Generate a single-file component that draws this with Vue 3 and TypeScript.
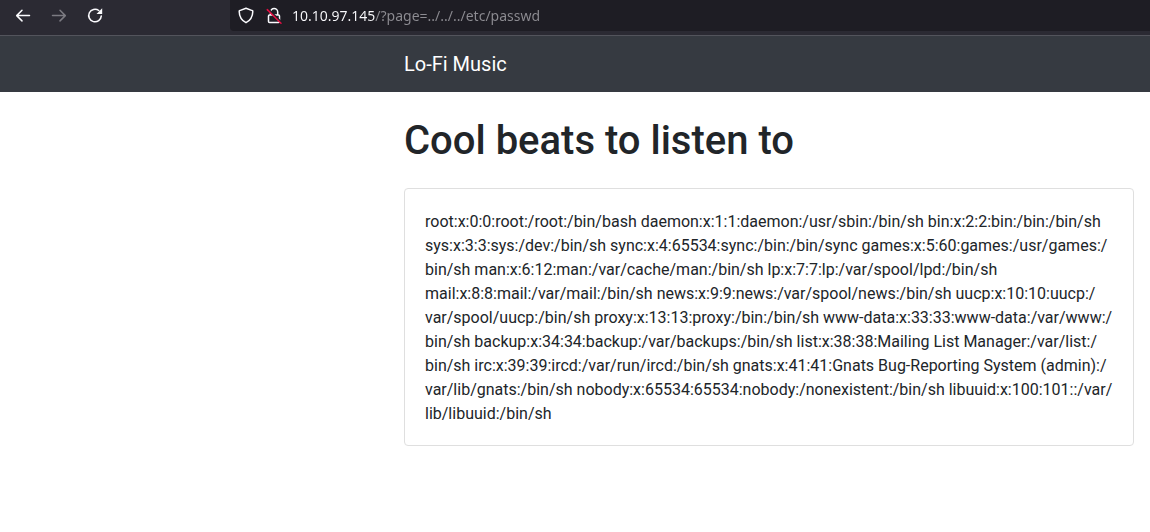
<script setup lang="ts">
import { ref } from 'vue'

const address = ref<string>('10.10.97.145/?page=../../../etc/passwd')

const accounts: string[] = [
  'root:x:0:0:root:/root:/bin/bash',
  'daemon:x:1:1:daemon:/usr/sbin:/bin/sh',
  'bin:x:2:2:bin:/bin:/bin/sh',
  'sys:x:3:3:sys:/dev:/bin/sh',
  'sync:x:4:65534:sync:/bin:/bin/sync',
  'games:x:5:60:games:/usr/games:/bin/sh',
  'man:x:6:12:man:/var/cache/man:/bin/sh',
  'lp:x:7:7:lp:/var/spool/lpd:/bin/sh',
  'mail:x:8:8:mail:/var/mail:/bin/sh',
  'news:x:9:9:news:/var/spool/news:/bin/sh',
  'uucp:x:10:10:uucp:/var/spool/uucp:/bin/sh',
  'proxy:x:13:13:proxy:/bin:/bin/sh',
  'www-data:x:33:33:www-data:/var/www:/bin/sh',
  'backup:x:34:34:backup:/var/backups:/bin/sh',
  'list:x:38:38:Mailing List Manager:/var/list:/bin/sh',
  'irc:x:39:39:ircd:/var/run/ircd:/bin/sh',
  'gnats:x:41:41:Gnats Bug-Reporting System (admin):/var/lib/gnats:/bin/sh',
  'nobody:x:65534:65534:nobody:/nonexistent:/bin/sh',
  'libuuid:x:100:101::/var/lib/libuuid:/bin/sh',
]

// A zero-width space after each slash lets long paths wrap there.
const listing: string = accounts.join(' ').replace(/\//g, '/\u200b')
</script>

<template>
  <div class="window">
    <div class="toolbar">
      <div class="history">
        <button type="button" class="tool" aria-label="Back">
          <svg viewBox="0 0 16 16"><path d="M7 2.300 1.700 7.600 7 12.900M1.900 7.600h12.600" /></svg>
        </button>
        <button type="button" class="tool" aria-label="Forward" disabled>
          <svg viewBox="0 0 16 16"><path d="M9 2.300l5.300 5.300L9 12.900M14.100 7.600H1.500" /></svg>
        </button>
        <button type="button" class="tool" aria-label="Reload">
          <svg viewBox="0 0 16 16">
            <path d="M11.800 2.500A6.300 6.300 0 1 0 14.300 7.900" />
            <path class="solid" d="M15.200.3v5.700H9.500z" />
          </svg>
        </button>
      </div>
      <div class="address">
        <button type="button" class="badge" aria-label="Tracking protection">
          <svg viewBox="0 0 16 16">
            <path d="M8 .3 14.300 2.600c.4.1.5.4.5.8-.1 5-2.400 8.900-6.800 11.300C3.600 12.300 1.300 8.400 1.200 3.400c0-.4.1-.7.5-.8z" />
          </svg>
        </button>
        <button type="button" class="badge" aria-label="Connection is not secure">
          <svg viewBox="0 0 16 16">
            <path d="M4.500 7V4a3.600 3.600 0 0 1 7.200 0V7M3.500 7h9q1 0 1 1v5.600q0 1-1 1h-9q-1 0-1-1V8q0-1 1-1z" />
            <path class="gap" d="M2.200.9 15.900 14.600" />
            <path class="strike" d="M1.300 1.600 15 15.300" />
          </svg>
        </button>
        <input v-model="address" class="url" type="text" aria-label="Address" spellcheck="false" />
      </div>
    </div>

    <nav class="navbar">
      <a class="brand" href="#">Lo-Fi Music</a>
    </nav>

    <main class="content">
      <h1>Cool beats to listen to</h1>
      <section class="card">
        <p>{{ listing }}</p>
      </section>
    </main>
  </div>
</template>

<style>
body {
  margin: 0;
  background: #fff;
}
</style>

<style scoped>
.window {
  font-family: Roboto, "Liberation Sans", sans-serif;
  font-size: 16px;
  line-height: 24px;
  color: #212529;
}

.toolbar {
  display: flex;
  height: 35px;
  background: #2b2a33;
  border-bottom: 1px solid #53545c;
}

.history {
  display: flex;
  flex: none;
  box-sizing: border-box;
  width: 230px;
  height: 31px;
  padding-left: 15px;
  gap: 20px;
  align-items: center;
}

.tool,
.badge {
  flex: none;
  width: 16px;
  height: 16px;
  padding: 0;
  border: 0;
  background: none;
  color: #fbfbfe;
}

.tool:disabled {
  color: #7c7b82;
}

svg {
  display: block;
  width: 16px;
  height: 16px;
  overflow: visible;
  fill: none;
  stroke: currentColor;
  stroke-width: 1.5;
  stroke-linecap: round;
  stroke-linejoin: round;
}

.solid {
  fill: currentColor;
  stroke: none;
}

.gap {
  stroke: #1e1d24;
}

.strike {
  stroke: #e20f42;
}

.address {
  display: flex;
  flex: 1;
  height: 31px;
  padding-left: 8px;
  align-items: center;
  background: #1e1d24;
  border-bottom-left-radius: 4px;
}

.badge + .badge {
  margin: 0 10px 0 12px;
}

.url {
  --host-width: 83px;
  flex: 1;
  min-width: 0;
  height: 24px;
  padding: 0;
  border: 0;
  outline: 0;
  font: 14px/24px "Noto Sans", sans-serif;
  color: transparent;
  caret-color: #fbfbfe;
  background: linear-gradient(90deg, #fbfbfe var(--host-width), #8d8c92 var(--host-width));
  background-clip: text;
}

.navbar {
  display: flex;
  padding: 8px 16px 8px 404px;
  min-height: 40px;
  align-items: center;
  background: #363a41;
}

.brand {
  font-size: 20px;
  line-height: 32px;
  color: #fff;
  text-decoration: none;
}

.content {
  padding: 25px 16px 24px 404px;
}

h1 {
  margin: 0 0 23px;
  font-size: 40px;
  line-height: 48px;
  font-weight: 500;
}

.card {
  padding: 21px 20px 19px;
  border: 1px solid #dfdfdf;
  border-radius: 4px;
}

.card p {
  margin: 0;
}
</style>
